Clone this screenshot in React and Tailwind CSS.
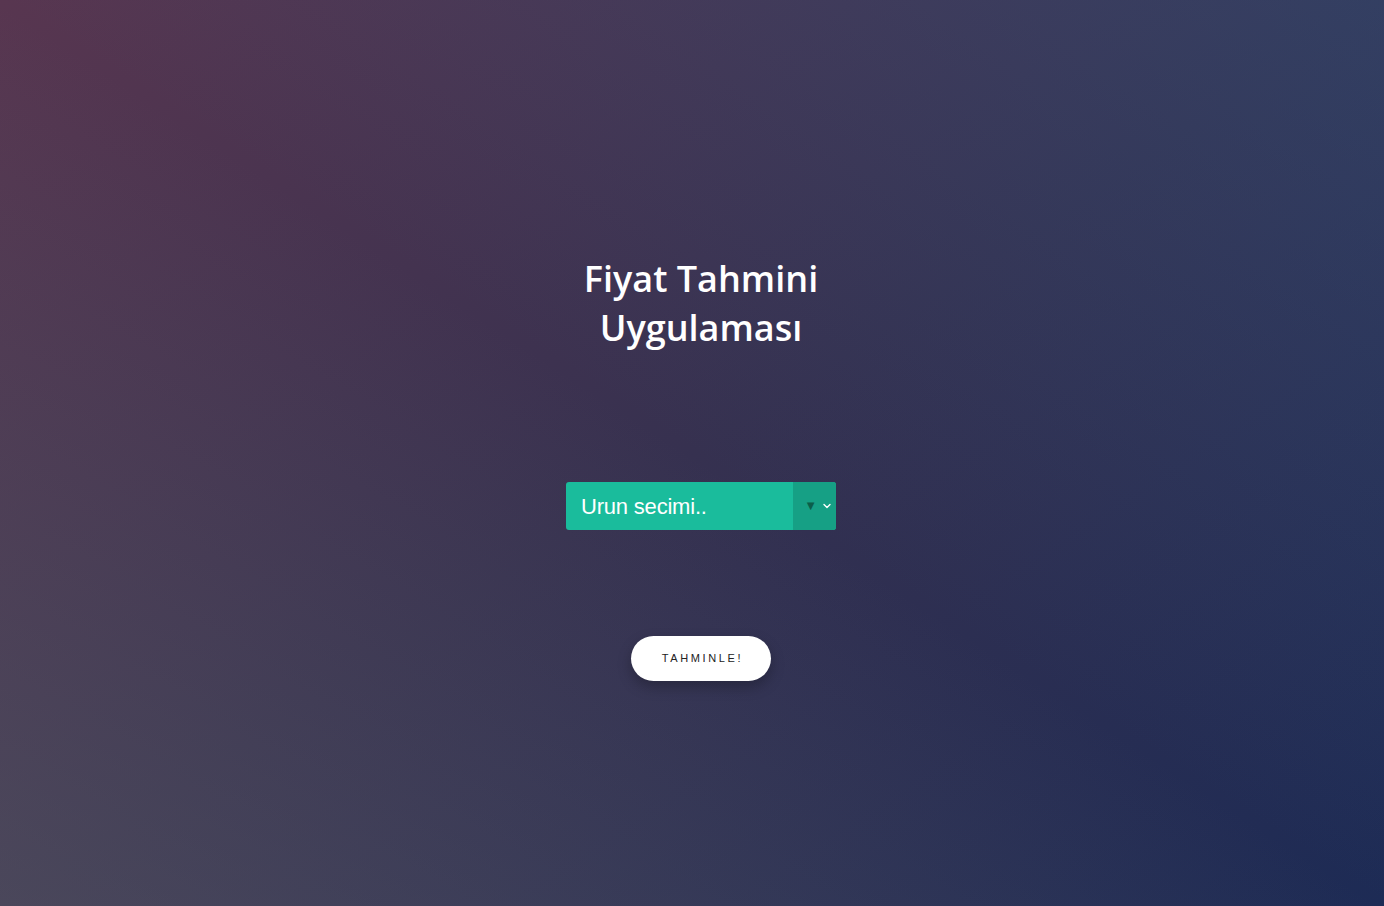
export default function App() {
  return (
    <div className="min-h-[906px] w-full bg-[linear-gradient(to_top_right,rgba(110,110,110,0.36),rgba(110,110,110,0)_50%,rgba(45,95,140,0)_50%,rgba(45,95,140,0.3)),linear-gradient(to_bottom_right,#583650,#363150_50%,#1d2b55)] font-['Open_Sans',sans-serif]">
      <div className="flex flex-col items-center pl-[18px] pt-[254px]">
        {/* Title */}
        <h1 className="w-[270px] text-center text-[36px] font-semibold leading-[49px] text-white">
          Fiyat Tahmini Uygulaması
        </h1>

        {/* Select */}
        <div className="mt-[130px] flex h-[48px] w-[270px] overflow-hidden rounded-[3px] bg-[#1abc9c]">
          <div className="flex flex-1 items-center pl-[15px] font-['Liberation_Sans',Arial,sans-serif] text-[22px] tracking-[-0.2px] text-white">
            Urun secimi..
          </div>
          <div className="flex w-[43px] items-center justify-end gap-[6px] bg-[#16a085] pr-[5px]">
            <span className="mb-[2px] text-[13px] leading-none text-[#0b5e4a]">▼</span>
            <svg width="8" height="6" viewBox="0 0 8 6" fill="none">
              <path d="M1 1.5L4 4.5L7 1.5" stroke="white" strokeWidth="1.4" strokeLinecap="round" strokeLinejoin="round" />
            </svg>
          </div>
        </div>

        {/* Button */}
        <button className="mt-[106px] flex h-[45px] w-[140px] items-center justify-center rounded-full bg-white pl-[3px] font-['Liberation_Sans',Arial,sans-serif] text-[11px] tracking-[2.6px] text-[#222] shadow-[0_6px_14px_rgba(0,0,0,0.25)]">
          TAHMINLE!
        </button>
      </div>
    </div>
  );
}
